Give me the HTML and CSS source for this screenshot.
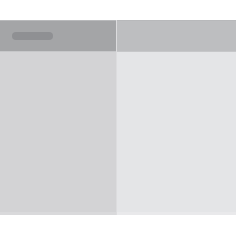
FILE: index.html
```html
<!DOCTYPE html>
<html>
<head>
<meta charset="utf-8">
<link rel="stylesheet" href="styles.css">
</head>
<body>
<div class="app">
  <div class="pane pane-left">
    <div class="head head-left"><span class="pill"></span></div>
    <div class="body body-left"></div>
  </div>
  <div class="pane pane-right">
    <div class="head head-right"></div>
    <div class="body body-right"></div>
  </div>
</div>
</body>
</html>
```
FILE: styles.css
```css
html, body {
  margin: 0;
  padding: 0;
  background: #ffffff;
  font-family: "Liberation Sans", Arial, sans-serif;
}
.app {
  margin-top: 20px;
  height: 195px;
  display: grid;
  grid-template-columns: 117px 1fr;
}
.pane {
  display: flex;
  flex-direction: column;
}
.pane-left {
  border-right: 1px solid #dcdcde;
}
.head {
  height: 30px;
  border-top: 1px solid #b8b9bb;
  border-bottom: 1px solid #c6c7c9;
  display: flex;
  align-items: center;
  padding-left: 12px;
}
.head-left {
  background: #a4a5a7;
}
.head-right {
  background: #bdbec0;
}
.pill {
  width: 41px;
  height: 8px;
  border-radius: 4px;
  background: #8f9093;
}
.body {
  flex: 1;
  border-bottom: 3px solid #e6e6e8;
}
.body-left {
  background: #d3d3d5;
  border-bottom-color: #d9d9db;
}
.body-right {
  background: #e4e5e7;
  border-bottom-color: #e9e9eb;
}
```
